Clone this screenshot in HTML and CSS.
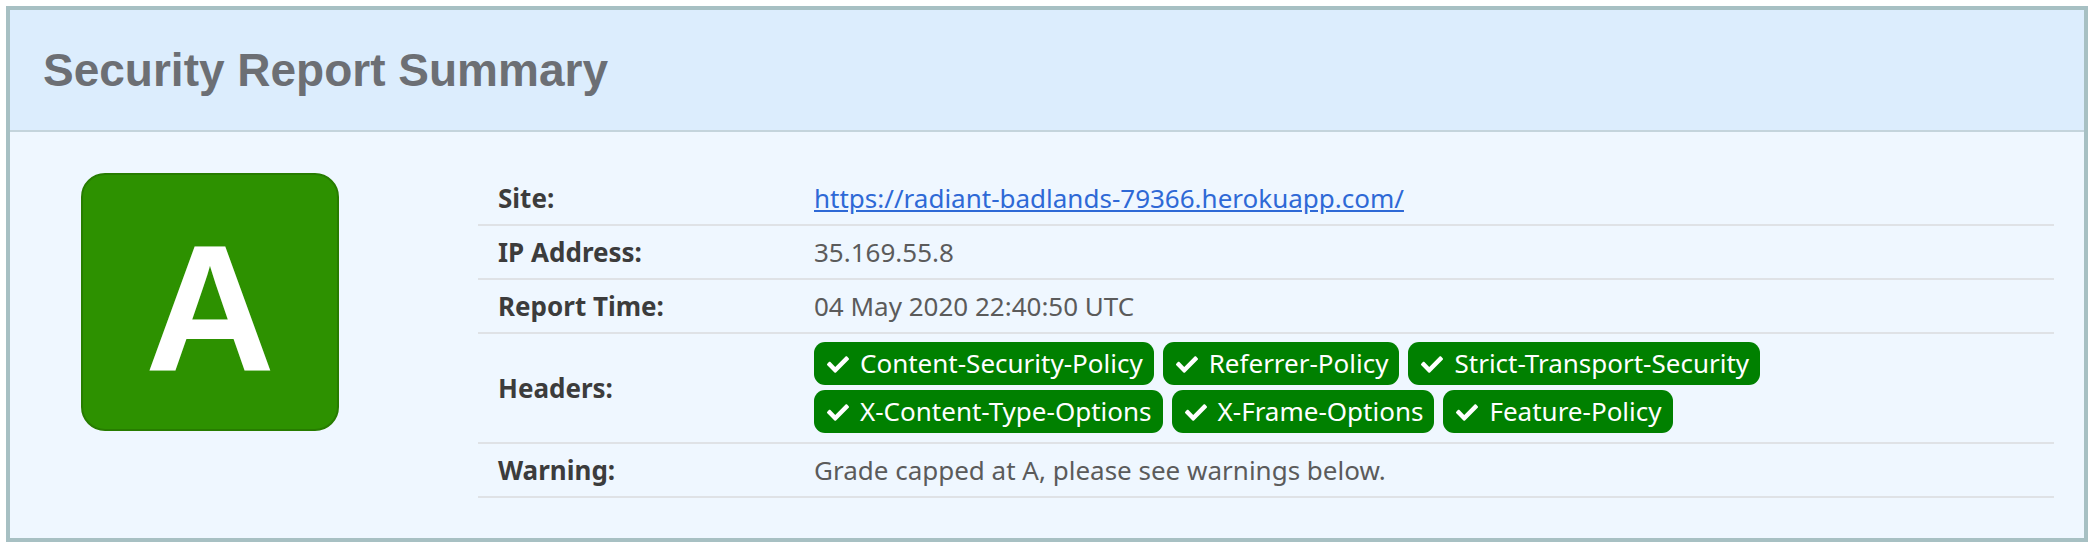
FILE: index.html
```html
<!DOCTYPE html>
<html lang="en">
<head>
<meta charset="utf-8">
<title>Security Report Summary</title>
<link rel="stylesheet" href="styles.css">
</head>
<body>
<section class="summary">
  <div class="summary-header">
    <h1 class="summary-title">Security Report Summary</h1>
  </div>
  <div class="summary-body">
    <div class="grade-col">
      <div class="grade-box"><span class="grade-letter">A</span></div>
    </div>
    <table class="report-table">
      <tbody>
        <tr>
          <th class="label">Site:</th>
          <td class="value"><a class="site-link" href="#">https://radiant-badlands-79366.herokuapp.com/</a></td>
        </tr>
        <tr>
          <th class="label">IP Address:</th>
          <td class="value">35.169.55.8</td>
        </tr>
        <tr>
          <th class="label">Report Time:</th>
          <td class="value">04 May 2020 22:40:50 UTC</td>
        </tr>
        <tr>
          <th class="label">Headers:</th>
          <td class="value headers-cell">
            <div class="badges">
              <span class="badge"><svg class="check" viewBox="0 65 512 382"><path d="M173.898 439.404l-166.4-166.4c-9.997-9.997-9.997-26.206 0-36.204l36.203-36.204c9.997-9.998 26.207-9.998 36.204 0L192 312.69 432.095 72.596c9.997-9.997 26.207-9.997 36.204 0l36.203 36.204c9.997 9.997 9.997 26.206 0 36.204l-294.4 294.401c-9.998 9.997-26.207 9.997-36.204-.001z"/></svg>Content-Security-Policy</span>
              <span class="badge"><svg class="check" viewBox="0 65 512 382"><path d="M173.898 439.404l-166.4-166.4c-9.997-9.997-9.997-26.206 0-36.204l36.203-36.204c9.997-9.998 26.207-9.998 36.204 0L192 312.69 432.095 72.596c9.997-9.997 26.207-9.997 36.204 0l36.203 36.204c9.997 9.997 9.997 26.206 0 36.204l-294.4 294.401c-9.998 9.997-26.207 9.997-36.204-.001z"/></svg>Referrer-Policy</span>
              <span class="badge"><svg class="check" viewBox="0 65 512 382"><path d="M173.898 439.404l-166.4-166.4c-9.997-9.997-9.997-26.206 0-36.204l36.203-36.204c9.997-9.998 26.207-9.998 36.204 0L192 312.69 432.095 72.596c9.997-9.997 26.207-9.997 36.204 0l36.203 36.204c9.997 9.997 9.997 26.206 0 36.204l-294.4 294.401c-9.998 9.997-26.207 9.997-36.204-.001z"/></svg>Strict-Transport-Security</span>
              <span class="badge"><svg class="check" viewBox="0 65 512 382"><path d="M173.898 439.404l-166.4-166.4c-9.997-9.997-9.997-26.206 0-36.204l36.203-36.204c9.997-9.998 26.207-9.998 36.204 0L192 312.69 432.095 72.596c9.997-9.997 26.207-9.997 36.204 0l36.203 36.204c9.997 9.997 9.997 26.206 0 36.204l-294.4 294.401c-9.998 9.997-26.207 9.997-36.204-.001z"/></svg>X-Content-Type-Options</span>
              <span class="badge"><svg class="check" viewBox="0 65 512 382"><path d="M173.898 439.404l-166.4-166.4c-9.997-9.997-9.997-26.206 0-36.204l36.203-36.204c9.997-9.998 26.207-9.998 36.204 0L192 312.69 432.095 72.596c9.997-9.997 26.207-9.997 36.204 0l36.203 36.204c9.997 9.997 9.997 26.206 0 36.204l-294.4 294.401c-9.998 9.997-26.207 9.997-36.204-.001z"/></svg>X-Frame-Options</span>
              <span class="badge"><svg class="check" viewBox="0 65 512 382"><path d="M173.898 439.404l-166.4-166.4c-9.997-9.997-9.997-26.206 0-36.204l36.203-36.204c9.997-9.998 26.207-9.998 36.204 0L192 312.69 432.095 72.596c9.997-9.997 26.207-9.997 36.204 0l36.203 36.204c9.997 9.997 9.997 26.206 0 36.204l-294.4 294.401c-9.998 9.997-26.207 9.997-36.204-.001z"/></svg>Feature-Policy</span>
            </div>
          </td>
        </tr>
        <tr>
          <th class="label">Warning:</th>
          <td class="value">Grade capped at A, please see warnings below.</td>
        </tr>
      </tbody>
    </table>
  </div>
</section>
</body>
</html>
```

FILE: styles.css
```css
html, body {
  margin: 0;
  padding: 0;
  background: #ffffff;
}

body {
  padding: 6px 8px 0 6px;
  font-family: "Noto Sans", "Open Sans", sans-serif;
}

.summary {
  border: 4px solid #a7c0c3;
  background: #eff7ff;
}

.summary-header {
  height: 120px;
  display: flex;
  align-items: center;
  padding-left: 33px;
  background: #dcedfd;
  border-bottom: 2px solid #c4d4dc;
}

.summary-title {
  margin: 0;
  font-family: "Liberation Sans", Arial, sans-serif;
  font-weight: bold;
  font-size: 46px;
  line-height: 1;
  color: #6c6f74;
}

.summary-body {
  display: flex;
  align-items: flex-start;
  padding: 40px 30px 40px 71px;
}

.grade-col {
  width: 397px;
  flex: none;
}

.grade-box {
  width: 258px;
  height: 258px;
  box-sizing: border-box;
  margin-top: 1px;
  border: 2px solid #277c00;
  border-radius: 24px;
  background: #2d9100;
  display: flex;
  align-items: center;
  justify-content: center;
  padding-top: 14px;
}

.grade-letter {
  font-family: "Liberation Sans", Arial, sans-serif;
  font-weight: bold;
  font-size: 180px;
  line-height: 1;
  color: #ffffff;
}

.report-table {
  flex: 1;
  border-collapse: collapse;
  font-size: 26px;
}

.report-table th,
.report-table td {
  padding: 7px 20px;
  line-height: 38px;
  border-bottom: 2px solid #dfe2e6;
  vertical-align: middle;
  text-align: left;
}

.label {
  width: 276px;
  font-weight: bold;
  color: #3c3c3c;
}

.value {
  color: #5b5b5b;
}

.site-link {
  color: #2e69d6;
  text-decoration: underline;
}

.report-table .headers-cell {
  padding-top: 8px;
  padding-bottom: 9px;
}

.badges {
  display: flex;
  flex-wrap: wrap;
  column-gap: 9px;
  row-gap: 5px;
}

.badge {
  display: inline-flex;
  align-items: center;
  height: 43px;
  padding: 0 11px 0 13px;
  border-radius: 11px;
  background: #008000;
  color: #ffffff;
  font-size: 26px;
  line-height: 43px;
  white-space: nowrap;
}

.check {
  width: 22px;
  height: 17px;
  margin-right: 11px;
  margin-top: 2px;
  fill: #ffffff;
}
```
